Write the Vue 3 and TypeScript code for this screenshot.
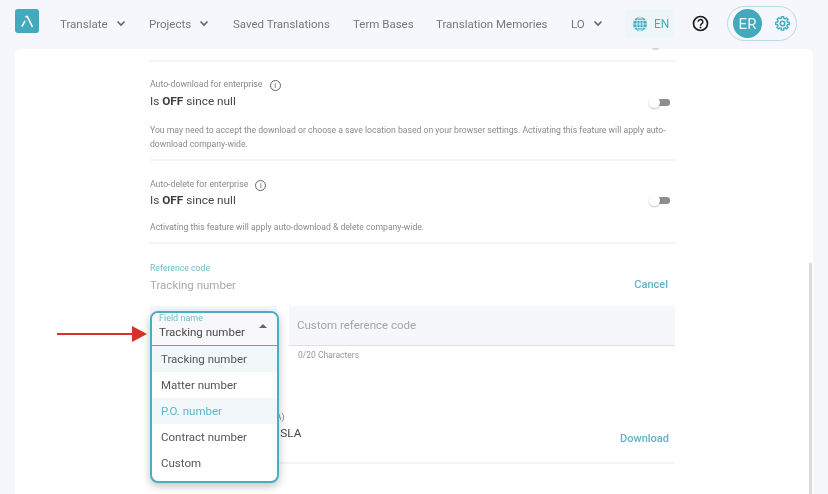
<script setup lang="ts">
const navItems = [
  { label: 'Translate', caret: true, w: 89 },
  { label: 'Projects', caret: true, w: 84 },
  { label: 'Saved Translations', caret: false, w: 120 },
  { label: 'Term Bases', caret: false, w: 83 },
  { label: 'Translation Memories', caret: false, w: 135 },
  { label: 'LO', caret: true, w: 54 },
]
const options = ['Tracking number', 'Matter number', 'P.O. number', 'Contract number', 'Custom']
</script>

<template>
  <div class="page">
    <header class="topbar">
      <div class="logo">
        <svg width="24" height="24" viewBox="0 0 24 24"><path d="M6.8 17.6 10 11.8M10.4 7.6h1.9L17.5 18" fill="none" stroke="#fff" stroke-width="1.6" /></svg>
      </div>
      <nav class="nav">
        <a v-for="item in navItems" :key="item.label" class="nav-item" :style="{ width: item.w + 'px' }">
          <span>{{ item.label }}</span>
          <svg v-if="item.caret" class="caret" width="10" height="7" viewBox="0 0 10 7"><path d="M1.5 1.5 5 5l3.5-3.5" fill="none" stroke="#666" stroke-width="1.6" /></svg>
        </a>
      </nav>
      <div class="lang">
        <svg width="16" height="16" viewBox="0 0 16 16" fill="none" stroke="#47adc3" stroke-width="1.3">
          <circle cx="8" cy="8" r="7" fill="#47adc3" stroke="none" />
          <g stroke="#e6f3f7" stroke-width=".8"><ellipse cx="8" cy="8" rx="3.2" ry="7" /><path d="M8 1v14M1 8h14M2 4.5h12M2 11.5h12" /></g>
        </svg>
        <span>EN</span>
      </div>
      <svg class="help" width="17" height="17" viewBox="0 0 17 17" fill="none">
        <circle cx="8.5" cy="8.5" r="7" stroke="#1c1c1c" stroke-width="1.7" />
        <path d="M6.2 6.8a2.3 2.3 0 1 1 3.6 1.9c-.9.6-1.3 1-1.3 2" stroke="#1c1c1c" stroke-width="1.5" />
        <circle cx="8.5" cy="12.5" r=".95" fill="#1c1c1c" />
      </svg>
      <div class="account">
        <div class="avatar">ER</div>
        <svg class="gear" width="17" height="17" viewBox="0 0 24 24" fill="none" stroke="#47adc3" stroke-width="2.3">
          <circle cx="12" cy="12" r="3.2" />
          <path d="M10.3 2.5h3.4l.5 2.8 1.9.8 2.3-1.6 2.4 2.4-1.6 2.3.8 1.9 2.8.5v3.4l-2.8.5-.8 1.9 1.6 2.3-2.4 2.4-2.3-1.6-1.9.8-.5 2.8h-3.4l-.5-2.8-1.9-.8-2.3 1.6-2.4-2.4 1.6-2.3-.8-1.9-2.8-.5v-3.4l2.8-.5.8-1.9L3.6 6.7 6 4.3l2.3 1.6 1.9-.8z" transform="translate(12 12) scale(.88) translate(-12 -13.5)" />
        </svg>
      </div>
    </header>

    <main class="card">
      <div class="peek"></div>
      <div class="scrollbar"></div>
      <div class="column">
        <section class="setting first">
          <div class="label">Auto-download for enterprise <span class="info">i</span></div>
          <div class="row">
            <div class="value">Is <b>OFF</b> since null</div>
            <span class="toggle"><i></i></span>
          </div>
          <p class="desc">You may need to accept the download or choose a save location based on your browser settings. Activating this feature will apply auto-download company-wide.</p>
        </section>
        <section class="setting second">
          <div class="label">Auto-delete for enterprise <span class="info">i</span></div>
          <div class="row">
            <div class="value">Is <b>OFF</b> since null</div>
            <span class="toggle"><i></i></span>
          </div>
          <p class="desc">Activating this feature will apply auto-download &amp; delete company-wide.</p>
        </section>

        <section class="reference">
          <div class="ref-label">Reference code</div>
          <div class="ref-row">
            <span class="ref-value">Tracking number</span>
            <a class="link">Cancel</a>
          </div>
          <div class="fields">
            <div class="select-slot">
              <div class="dropdown">
                <div class="dd-head">
                  <span class="dd-label">Field name</span>
                  <span class="dd-value">Tracking number</span>
                  <span class="dd-tri"></span>
                </div>
                <ul class="dd-list">
                  <li v-for="(o, i) in options" :key="o" :class="{ hover: i === 0, active: i === 2 }">{{ o }}</li>
                </ul>
              </div>
              <div class="pointer">
                <svg width="92" height="18" viewBox="0 0 92 18"><path d="M0 9h76" stroke="#d9302c" stroke-width="2.2" fill="none" /><path d="M75 1l15 8-15 8z" fill="#d9302c" /></svg>
              </div>
            </div>
            <div class="custom">
              <div class="custom-input">Custom reference code</div>
              <div class="count">0/20 Characters</div>
            </div>
          </div>
        </section>

        <section class="sla">
          <div class="label">Your service level agreement (SLA)</div>
          <div class="sla-row">
            <div class="value">Service level agreement: SLA</div>
            <a class="link">Download</a>
          </div>
        </section>
      </div>
    </main>
  </div>
</template>

<style>
html, body { margin: 0; overflow: hidden; }
</style>

<style scoped>
.page {
  width: 828px;
  height: 494px;
  overflow: hidden;
  background: #f6f7fc;
  font-family: Roboto, "Liberation Sans", sans-serif;
  display: flex;
  flex-direction: column;
  filter: blur(0.45px);
}
.topbar {
  flex: 0 0 49px;
  display: flex;
  align-items: center;
  padding: 0 0 2px 15px;
  box-sizing: border-box;
}
.logo {
  width: 24px;
  height: 24px;
  border-radius: 3px;
  background: #43a9bd;
  margin-top: -5px;
}
.logo svg { display: block; }
.nav { display: flex; margin-left: 21px; }
.nav-item {
  display: flex;
  align-items: center;
  font-size: 11.5px;
  color: #777;
  white-space: nowrap;
}
.caret { margin-left: 8px; }
.lang {
  width: 49px;
  height: 29px;
  background: #eff6f9;
  border-radius: 3px;
  display: flex;
  align-items: center;
  padding-left: 7px;
  box-sizing: border-box;
  gap: 6px;
  color: #47adc3;
  font-size: 12px;
}
.help { margin-left: 18px; }
.account {
  width: 70px;
  height: 35px;
  margin-left: 18px;
  border: 1.5px solid #b3dde6;
  border-radius: 18px;
  box-sizing: border-box;
  display: flex;
  align-items: center;
  padding-left: 5px;
}
.avatar {
  width: 29px;
  height: 29px;
  border-radius: 50%;
  background: #43a9bd;
  color: #e8f6f9;
  font-size: 15px;
  display: flex;
  align-items: center;
  justify-content: center;
}
.gear { margin-left: 12px; }
.card {
  position: relative;
  flex: 1;
  margin: 0 15px;
  background: #fff;
  border-radius: 6px 6px 0 0;
  padding-left: 135px;
}
.peek {
  position: absolute;
  left: 637px;
  top: -1px;
  width: 7px;
  height: 2px;
  border-radius: 0 0 4px 4px;
  background: #d8d8d8;
}
.scrollbar {
  position: absolute;
  right: 1px;
  top: 214px;
  bottom: 0;
  width: 3px;
  background: #dcdcdc;
}
.column {
  width: 525px;
  padding-top: 11px;
}
.setting { border-top: 2px solid #f4f4f6; }
.first { height: 99px; padding-top: 15px; box-sizing: border-box; }
.second { height: 83px; padding-top: 16px; box-sizing: border-box; }
.label {
  font-size: 8.7px;
  line-height: 14px;
  color: #8a8a8a;
  white-space: nowrap;
}
.info {
  display: inline-flex;
  width: 9px;
  height: 9px;
  margin-left: 5px;
  border: 1px solid #666;
  border-radius: 50%;
  color: #555;
  font-size: 7.5px;
  line-height: 1;
  align-items: center;
  justify-content: center;
  vertical-align: -1px;
}
.row {
  display: flex;
  justify-content: space-between;
  align-items: center;
  height: 18px;
  margin-top: 1px;
  padding-right: 5px;
}
.second .row { margin-top: 0; }
.value {
  font-size: 11.8px;
  color: #454545;
  white-space: nowrap;
}
.value b { font-weight: 700; color: #3d3d3d; }
.toggle {
  position: relative;
  width: 17px;
  height: 7px;
  margin-top: 2px;
  background: #8e8e8e;
  border-radius: 3px;
}
.second .toggle { margin-top: 0; }
.toggle i {
  position: absolute;
  left: -4px;
  top: -2px;
  width: 11px;
  height: 11px;
  border-radius: 50%;
  background: #fff;
  box-shadow: 0 1px 2px rgba(0, 0, 0, 0.25);
}
.desc {
  margin: 13px 0 0;
  font-size: 8.65px;
  line-height: 14px;
  color: #8a8a8a;
}
.second .desc { margin-top: 11px; }
.reference {
  border-top: 2px solid #f4f4f6;
  padding-top: 18px;
}
.ref-label {
  font-size: 8.7px;
  line-height: 12px;
  color: #6fbccd;
}
.ref-row {
  display: flex;
  justify-content: space-between;
  align-items: center;
  height: 20px;
  padding-right: 7px;
  margin-top: 1px;
}
.ref-row .link { margin-top: -2px; }
.ref-value { font-size: 11.5px; color: #a9a9a9; }
.link {
  font-size: 11px;
  font-weight: 500;
  color: #5db5c9;
}
.fields {
  display: flex;
  gap: 12px;
  margin-top: 11px;
}
.select-slot {
  position: relative;
  flex: 0 0 127px;
  height: 40px;
  background: #f6f7fb;
}
.dropdown {
  position: absolute;
  z-index: 2;
  left: 0;
  top: 5px;
  width: 129px;
  height: 172px;
  box-sizing: border-box;
  border: 2px solid #4aadc2;
  border-radius: 8px;
  background: #fff;
  box-shadow: 0 3px 8px rgba(0, 0, 0, 0.25);
  overflow: hidden;
}
.dd-head {
  position: relative;
  height: 32px;
  border-bottom: 1px solid #4aadc2;
  background: #f8f8fa;
}
.dd-label {
  position: absolute;
  left: 7px;
  top: 0;
  font-size: 9px;
  line-height: 11px;
  color: #74bfcf;
}
.dd-value {
  position: absolute;
  left: 7px;
  top: 11px;
  font-size: 11.5px;
  line-height: 16px;
  color: #4a4a4a;
  white-space: nowrap;
}
.dd-tri {
  position: absolute;
  right: 10px;
  top: 11px;
  width: 0;
  height: 0;
  border-left: 4px solid transparent;
  border-right: 4px solid transparent;
  border-bottom: 4px solid #666;
}
.dd-list {
  list-style: none;
  margin: 0;
  padding: 0;
}
.dd-list li {
  height: 26px;
  line-height: 26px;
  padding-left: 9px;
  font-size: 11.5px;
  color: #555;
}
.dd-list li.hover { background: #f2f8fa; }
.dd-list li.active { background: #f2f8fa; color: #5db5c9; }
.pointer {
  position: absolute;
  left: -93px;
  top: 19px;
}
.pointer svg { display: block; }
.custom { flex: 1; }
.custom-input {
  height: 40px;
  box-sizing: border-box;
  background: #f6f7fb;
  border-bottom: 1px solid #dedfe3;
  padding-left: 8px;
  font-size: 11.5px;
  line-height: 38px;
  color: #a5a5a5;
}
.count {
  margin: 4px 0 0 9px;
  font-size: 8.5px;
  line-height: 10px;
  color: #999;
}
.sla {
  margin-top: 50px;
  height: 54px;
  border-bottom: 2px solid #f4f4f6;
  box-sizing: border-box;
}
.sla-row {
  display: flex;
  justify-content: space-between;
  height: 22px;
  padding: 2px 6px 0 0;
}
.sla-row .link { margin-top: 6px; }
</style>
